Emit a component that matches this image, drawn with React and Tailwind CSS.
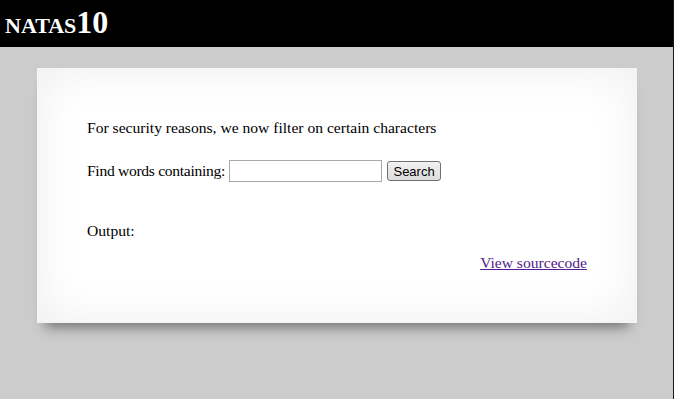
export default function App() {
  return (
    <div className="w-[674px] h-[399px] bg-[#cccccc] flex flex-col border-r border-[#1a1a1a] overflow-hidden" style={{ fontFamily: '"Liberation Serif", "Times New Roman", serif' }}>
      <div className="h-[47px] bg-black text-white flex items-end pb-[9px] pl-[5px] shrink-0">
        <h1 className="font-bold leading-none text-[32px] [font-variant:small-caps]">
          natas<span>10</span>
        </h1>
      </div>
      <div className="pl-[37px] pt-[21px]">
        <div className="w-[600px] h-[255px] bg-white pt-[51px] px-[50px] text-[15.6px] text-black shadow-[inset_0_0_50px_rgba(0,0,0,0.07),0_12px_12px_-8px_rgba(0,0,0,0.45)]">
          <div className="leading-[18px]">For security reasons, we now filter on certain characters</div>
          <div className="mt-[23px] flex items-center h-[22px] leading-[18px]">
            <span className="tracking-[-0.3px]">Find words containing:</span>
            <input type="text" className="ml-[4px] w-[153px] h-[22px] border border-[#a9a9a9] bg-white outline-none" />
            <button className="ml-[5px] h-[20px] w-[54px] border border-[#707070] rounded-[3px] bg-gradient-to-b from-[#f2f2f2] to-[#dcdcdc] text-[13px] leading-none text-black" style={{ fontFamily: '"Liberation Sans", Arial, sans-serif' }}>Search</button>
          </div>
          <div className="mt-[40px] leading-[18px]">Output:</div>
          <div className="mt-[14px] leading-[18px] text-right">
            <a href="#" className="underline text-[#551a8b]">View sourcecode</a>
          </div>
        </div>
      </div>
    </div>
  );
}
